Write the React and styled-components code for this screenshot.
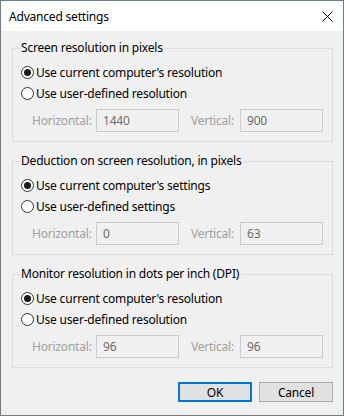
import React from "react";
import styled, { createGlobalStyle } from "styled-components";

const Global = createGlobalStyle`
  html, body { margin: 0; padding: 0; background: #ffffff; }
  body { font-family: "Noto Sans", "Liberation Sans", sans-serif; font-size: 12px; letter-spacing: -0.2px; }
  * { box-sizing: border-box; }
`;

const Window = styled.div`
  width: 344px;
  height: 416px;
  border: 1px solid #6f7c85;
  display: flex;
  flex-direction: column;
  background: #f0f0f0;
`;

const TitleBar = styled.div`
  height: 30px;
  flex: none;
  background: #ffffff;
  display: flex;
  align-items: center;
  justify-content: space-between;
  padding: 0 6px 0 8px;
  color: #000;
  font-size: 12px;
`;

const CloseButton = styled.div`
  width: 20px;
  height: 20px;
  display: flex;
  align-items: center;
  justify-content: center;
  margin-top: 1px;
`;

const Body = styled.div`
  flex: 1;
  padding: 9px 10px 0 11px;
  display: flex;
  flex-direction: column;
  gap: 11px;
`;

const Group = styled.fieldset`
  margin: 0;
  border: 1px solid #dcdcdc;
  padding: 6px 0 9px 8px;
  min-width: 0;
`;

const Legend = styled.legend`
  padding: 0 2px 0 1px;
  margin-left: -1px;
  line-height: 16px;
  color: #000;
`;

const RadioRow = styled.label`
  display: flex;
  align-items: center;
  height: 21px;
  color: #000;
  gap: 2px;
  white-space: nowrap;
`;

const RadioCircle = styled.span`
  width: 13px;
  height: 13px;
  border-radius: 50%;
  border: 1px solid #333333;
  background: #ffffff;
  display: flex;
  align-items: center;
  justify-content: center;
  flex: none;
  &::after {
    content: "";
    width: 7px;
    height: 7px;
    border-radius: 50%;
    background: #1b1b1b;
    display: ${(p) => (p.$checked ? "block" : "none")};
  }
`;

const InputRow = styled.div`
  display: flex;
  align-items: center;
  margin-top: 5px;
  padding-left: 11px;
`;

const FieldLabel = styled.span`
  width: ${(p) => p.$w}px;
  text-align: right;
  color: #a0a0a0;
  margin-right: 6px;
  white-space: nowrap;
`;

const TextBox = styled.div`
  width: 83px;
  height: 23px;
  border: 1px solid #cccccc;
  background: #f0f0f0;
  color: #6d6d6d;
  display: flex;
  align-items: center;
  padding-left: 6px;
`;

const Footer = styled.div`
  display: flex;
  justify-content: flex-end;
  gap: 7px;
  margin-top: 3px;
`;

const Button = styled.div`
  width: 74px;
  height: 20px;
  background: #e1e1e1;
  border: ${(p) => (p.$primary ? "2px solid #0078d7" : "1px solid #adadad")};
  display: flex;
  align-items: center;
  justify-content: center;
  color: #000;
`;

function Radio({ checked, children }) {
  return (
    <RadioRow>
      <RadioCircle $checked={checked} />
      <span>{children}</span>
    </RadioRow>
  );
}

function Section({ title, first, second, h, v }) {
  return (
    <Group>
      <Legend>{title}</Legend>
      <Radio checked>{first}</Radio>
      <Radio>{second}</Radio>
      <InputRow>
        <FieldLabel $w={58}>Horizontal:</FieldLabel>
        <TextBox>{h}</TextBox>
        <FieldLabel $w={55}>Vertical:</FieldLabel>
        <TextBox>{v}</TextBox>
      </InputRow>
    </Group>
  );
}

export default function App() {
  return (
    <>
      <Global />
      <Window>
        <TitleBar>
          <span>Advanced settings</span>
          <CloseButton>
            <svg width="11" height="11" viewBox="0 0 11 11">
              <path d="M0.5 0.5 L10.5 10.5 M10.5 0.5 L0.5 10.5" stroke="#000" strokeWidth="1" fill="none" />
            </svg>
          </CloseButton>
        </TitleBar>
        <Body>
          <Section
            title="Screen resolution in pixels"
            first="Use current computer's resolution"
            second="Use user-defined resolution"
            h="1440"
            v="900"
          />
          <Section
            title="Deduction on screen resolution, in pixels"
            first="Use current computer's settings"
            second="Use user-defined settings"
            h="0"
            v="63"
          />
          <Section
            title="Monitor resolution in dots per inch (DPI)"
            first="Use current computer's resolution"
            second="Use user-defined resolution"
            h="96"
            v="96"
          />
          <Footer>
            <Button $primary>OK</Button>
            <Button>Cancel</Button>
          </Footer>
        </Body>
      </Window>
    </>
  );
}
